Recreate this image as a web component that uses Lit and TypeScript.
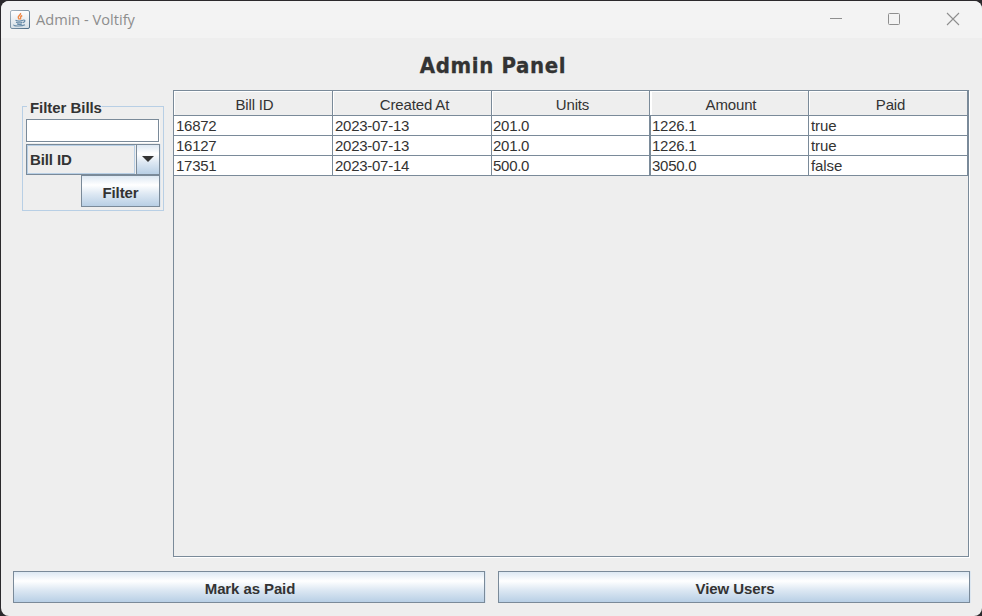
import { LitElement, html, css } from "lit";
import { customElement, state } from "lit/decorators.js";

@customElement("metal-button")
class MetalButton extends LitElement {
  static styles = css`
    :host { display: flex; box-sizing: border-box; }
    .button {
      flex: 1; box-sizing: border-box; margin: 0; padding: 4px 0 0 var(--label-shift, 2px);
      border: 1px solid #7a8a99; border-radius: 0; color: #333;
      background: linear-gradient(#dde8f3 0%, #fff 30%, #dde8f3 60%, #b8cfe5 100%);
      box-shadow: 1px 0 #dce6f0; letter-spacing: -0.1px;
      font: bold 15px/26px "Liberation Sans", Arial, sans-serif;
    }
  `;
  render() {
    return html`<button class="button"><slot></slot></button>`;
  }
}

@customElement("bills-table")
class BillsTable extends LitElement {
  @state() columns = ["Bill ID", "Created At", "Units", "Amount", "Paid"];
  @state() rows = [
    ["16872", "2023-07-13", "201.0", "1226.1", "true"],
    ["16127", "2023-07-13", "201.0", "1226.1", "true"],
    ["17351", "2023-07-14", "500.0", "3050.0", "false"],
  ];
  static styles = css`
    :host {
      display: block; box-sizing: border-box; border: 1px solid #7a8a99;
      box-shadow: 1px 1px #fff; font: 15px/20px "Liberation Sans", Arial, sans-serif; color: #333;
    }
    .row { display: grid; grid-template-columns: 159px 159px 158px 159px 159px; }
    .cell {
      box-sizing: border-box; height: 20px; padding-left: 2px; background: #fff; white-space: pre;
      border-right: 1px solid #7a8a99; border-bottom: 1px solid #7a8a99; letter-spacing: -0.27px;
    }
    .cell:nth-child(3) { padding-left: 1px; }
    .cell:nth-child(4) { border-left: 1px solid #7a8a99; padding-left: 1px; }
    .cell:last-child { letter-spacing: -0.1px; }
    .head {
      box-sizing: border-box; height: 25px; line-height: 28px; text-align: center; letter-spacing: -0.15px;
      border-right: 1px solid #7a8a99; border-bottom: 1px solid #7a8a99;
      box-shadow: inset 1px 1px #fff; padding-left: 3px;
    }
    .head:nth-child(2) { padding-left: 5px; }
    .head:nth-child(3) { padding-left: 4px; }
    .head:nth-child(4) { box-shadow: inset 2px 1px #fff; padding-left: 4px; }
    .head:last-child { padding-left: 5px; }
  `;
  render() {
    return html`
      <div class="row">${this.columns.map((c) => html`<div class="head">${c}</div>`)}</div>
      ${this.rows.map((r) => html`<div class="row">${r.map((v) => html`<div class="cell">${v}</div>`)}</div>`)}
    `;
  }
}

@customElement("app-root")
class AppRoot extends LitElement {
  static styles = css`
    :host { display: block; height: 616px; background: #2b292c; overflow: hidden; color: #333; }
    .window {
      box-sizing: border-box; height: 615px; margin: 0 0 0 1px; border-radius: 8px; overflow: hidden;
      background: #eee; display: flex; flex-direction: column;
    }
    .frame { padding-top: 1px; height: 616px; box-sizing: border-box; }
    .titlebar {
      flex: none; height: 37px; background: #f3f3f3; display: flex; align-items: center;
      padding: 0 22px 0 9px; box-sizing: border-box;
    }
    .logo { display: block; width: 20px; height: 20px; }
    .caption { flex: 1; margin: 0 0 2px 6px; font: 14.6px/20px "Open Sans", "Noto Sans", sans-serif; color: #8d8d8d; }
    .controls { display: flex; gap: 44px; padding-bottom: 1px; }
    .control { width: 14px; height: 14px; display: block; }
    .maximize { margin-right: 1px; }
    .heading {
      flex: none; height: 52px; box-sizing: border-box; padding: 14px 0 0 3px; text-align: center; line-height: 28px;
      font-size: 22px; font-weight: bold; font-family: "DejaVu Sans Condensed", "DejaVu Sans", sans-serif; margin: 0;
      letter-spacing: 0.65px; -webkit-text-stroke: 0.3px #333;
    }
    .content { flex: none; display: flex; height: 467px; }
    .side { width: 172px; padding: 7px 0 0 21px; box-sizing: border-box; }
    .group {
      box-sizing: border-box; width: 142px; height: 114px; margin: 0; padding: 4px 3px 0; border: 1px solid #b8cfe5;
      min-width: 0; display: block; font: bold 15px/18px "Liberation Sans", Arial, sans-serif;
    }
    .legend { padding: 0 0 0 3px; margin-left: 1px; height: 18px; line-height: 22px; letter-spacing: -0.05px; }
    .field {
      display: block; box-sizing: border-box; width: 133px; height: 23px; border: 1px solid #7a8a99;
      border-radius: 0; background: #fff; margin: 0; box-shadow: 1px 1px #fff; outline: none;
    }
    .combo { display: flex; box-sizing: border-box; width: 134px; height: 31px; margin-top: 2px; border: 1px solid #7a8a99; box-shadow: 1px 0 #dce6f0; }
    .value { flex: 1; box-sizing: border-box; border: 1px solid #b8cfe5; margin-right: 1px; padding-left: 2px; line-height: 28px; letter-spacing: -0.1px; }
    .arrow {
      width: 23px; box-sizing: border-box; border-left: 1px solid #7a8a99; display: flex; justify-content: center;
      background: linear-gradient(#dde8f3 0%, #fff 30%, #dde8f3 60%, #b8cfe5 100%);
    }
    .filter { width: 79px; height: 32px; margin-left: 55px; --label-shift: 0px; }
    .table { width: 796px; height: 467px; }
    .actions { flex: none; display: flex; gap: 13px; padding: 14px 12px 0; }
    .action { flex: none; width: 472px; height: 32px; }
  `;
  render() {
    return html`
      <div class="frame"><div class="window">
        <div class="titlebar">
          <svg class="logo" viewBox="0 0 20 20" fill="none">
            <defs><linearGradient id="plate" x2="0" y2="1"><stop stop-color="#fff"/><stop offset="1" stop-color="#d6dfe6"/></linearGradient>
            <linearGradient id="edge" x2="1" y2="1"><stop stop-color="#a5b4c0"/><stop offset="1" stop-color="#4c6b85"/></linearGradient></defs>
            <rect x=".5" y=".5" width="19" height="18" rx="1.5" fill="url(#plate)" stroke="url(#edge)"/>
            <path d="M10.5 3c1 2-3.2 2.8-2.2 5l1.2 1.5M12.2 5.5c-2.8 1.4-1.2 2-1.7 4" stroke="#ee8847" stroke-width="1.4"/>
            <path d="M5.5 10.2c2 1 5.5.9 7.5 0M6 12.2c2 .8 4.5.8 6.5 0M7 14c1.6.6 3.5.6 5 0M13.2 10.2c2.4-.6 2.2 1.6-.2 2.4M4 14.7c-1.6 1.4 7.5 2 11 .1" stroke="#678ba8" stroke-width="1.2"/>
          </svg>
          <div class="caption">Admin - Voltify</div>
          <div class="controls">
            <svg class="control" viewBox="0 0 14 14"><path d="M1 6.5h12" stroke="#8e8e8e"/></svg>
            <svg class="control maximize" viewBox="0 0 14 14"><rect x="1.5" y="1.5" width="11" height="11" rx="1" fill="none" stroke="#8e8e8e"/></svg>
            <svg class="control" viewBox="0 0 14 14"><path d="M1 1l12 12M13 1L1 13" stroke="#8e8e8e" stroke-width="1.1"/></svg>
          </div>
        </div>
        <h1 class="heading">Admin Panel</h1>
        <div class="content">
          <div class="side">
            <fieldset class="group">
              <legend class="legend">Filter Bills</legend>
              <input class="field" />
              <div class="combo">
                <div class="value">Bill ID</div>
                <div class="arrow"><svg width="12" height="29" viewBox="0 0 12 29"><path d="M0 11h12L6 17z" fill="#333"/></svg></div>
              </div>
              <metal-button class="filter">Filter</metal-button>
            </fieldset>
          </div>
          <bills-table class="table"></bills-table>
        </div>
        <div class="actions">
          <metal-button class="action">Mark as Paid</metal-button>
          <metal-button class="action">View Users</metal-button>
        </div>
      </div></div>
    `;
  }
}
